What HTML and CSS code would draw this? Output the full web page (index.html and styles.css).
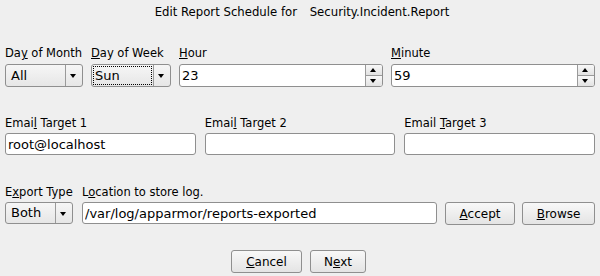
FILE: index.html
```html
<!DOCTYPE html>
<html>
<head>
    <title>Edit Report Schedule</title>
    <link rel="stylesheet" href="styles.css">
</head>
<body>
    <div class="dialog">
        <div class="title">
            <span>Edit Report Schedule for</span>
            <span class="report-name">Security.Incident.Report</span>
        </div>

        <div class="row schedule-row">
            <div class="field month-field">
                <label>Da<u>y</u> of Month</label>
                <div class="combo">
                    <span class="combo-text">All</span>
                    <span class="combo-arrow"></span>
                </div>
            </div>
            <div class="field week-field">
                <label><u>D</u>ay of Week</label>
                <div class="combo">
                    <span class="combo-text focused">Sun</span>
                    <span class="combo-arrow"></span>
                </div>
            </div>
            <div class="field grow">
                <label><u>H</u>our</label>
                <div class="spin">
                    <input type="text" value="23">
                    <div class="spin-buttons">
                        <span class="spin-up"></span>
                        <span class="spin-down"></span>
                    </div>
                </div>
            </div>
            <div class="field grow">
                <label><u>M</u>inute</label>
                <div class="spin">
                    <input type="text" value="59">
                    <div class="spin-buttons">
                        <span class="spin-up"></span>
                        <span class="spin-down"></span>
                    </div>
                </div>
            </div>
        </div>

        <div class="row email-row">
            <div class="field grow">
                <label>Emai<u>l</u> Target 1</label>
                <input class="text-input" type="text" value="root@localhost">
            </div>
            <div class="field grow">
                <label>Emai<u>l</u> Target 2</label>
                <input class="text-input" type="text" value="">
            </div>
            <div class="field grow">
                <label>Email <u>T</u>arget 3</label>
                <input class="text-input" type="text" value="">
            </div>
        </div>

        <div class="row export-row">
            <div class="field export-field">
                <label>E<u>x</u>port Type</label>
                <div class="combo">
                    <span class="combo-text">Both</span>
                    <span class="combo-arrow"></span>
                </div>
            </div>
            <div class="field grow">
                <label>L<u>o</u>cation to store log.</label>
                <input class="text-input" type="text" value="/var/log/apparmor/reports-exported">
            </div>
            <button class="btn accept-btn"><u>A</u>ccept</button>
            <button class="btn browse-btn"><u>B</u>rowse</button>
        </div>

        <div class="footer">
            <button class="btn cancel-btn"><u>C</u>ancel</button>
            <button class="btn next-btn">N<u>e</u>xt</button>
        </div>
    </div>
</body>
</html>
```

FILE: styles.css
```css
html, body {
    margin: 0;
    padding: 0;
}

body {
    background-color: #efefef;
    color: #000;
    font-family: "DejaVu Sans", sans-serif;
    font-size: 12px;
    line-height: 14px;
}

.dialog {
    width: 600px;
    height: 276px;
    padding: 5px 5px 0 5px;
    box-sizing: border-box;
}

.title {
    text-align: center;
    height: 14px;
    font-size: 11.7px;
    padding-left: 4px;
}

.report-name {
    margin-left: 9px;
}

.row {
    display: flex;
    align-items: flex-end;
}

.schedule-row {
    margin-top: 27px;
    gap: 8px;
}

.email-row {
    margin-top: 29px;
    gap: 9px;
}

.export-row {
    margin-top: 30px;
    gap: 8px;
}

.field {
    display: flex;
    flex-direction: column;
}

.field label {
    display: block;
    height: 14px;
    white-space: nowrap;
    font-size: 11.5px;
}

.schedule-row .field label {
    margin-bottom: 4px;
}

.email-row .field label,
.export-row .field label {
    margin-bottom: 3px;
}

.grow {
    flex: 1;
    min-width: 0;
}

.month-field {
    width: 78px;
}

.week-field {
    width: 80px;
}

.export-field {
    width: 68px;
    margin-right: 1px;
}

/* combo boxes */
.combo {
    height: 23px;
    box-sizing: border-box;
    border: 1px solid #8f8f8f;
    border-radius: 3px;
    background: linear-gradient(#f6f6f6, #e6e6e6);
    display: flex;
    align-items: center;
}

.export-row .combo {
    height: 22px;
}

.combo-text {
    flex: 1;
    padding-left: 5px;
    font-size: 13px;
}

.combo-text.focused {
    margin: 2px 1px 2px 2px;
    padding: 1px 0 1px 1px;
    outline: 1px dotted #000;
    line-height: 15px;
}

.combo-arrow {
    width: 17px;
    height: 100%;
    border-left: 1px solid #9a9a9a;
    box-sizing: border-box;
    position: relative;
    margin-left: 1px;
}

.combo-arrow::after {
    content: "";
    position: absolute;
    left: 4px;
    top: 9px;
    border-left: 3.5px solid transparent;
    border-right: 3.5px solid transparent;
    border-top: 4px solid #000;
}

/* text inputs */
input {
    font-family: "DejaVu Sans", sans-serif;
    font-size: 13px;
    color: #000;
}

.text-input {
    height: 22px;
    box-sizing: border-box;
    border: 1px solid #8f8f8f;
    border-radius: 3px;
    background: #fff;
    padding: 0 2px;
    margin: 0;
    outline: none;
    width: 100%;
}

/* spin boxes */
.spin {
    display: flex;
    height: 23px;
    box-sizing: border-box;
    border: 1px solid #8f8f8f;
    border-radius: 3px;
    background: #fff;
    overflow: hidden;
}

.spin input {
    flex: 1;
    min-width: 0;
    border: none;
    outline: none;
    padding: 0 2px;
    margin: 0;
    background: transparent;
}

.spin-buttons {
    width: 16px;
    display: flex;
    flex-direction: column;
    border-left: 1px solid #9a9a9a;
}

.spin-up,
.spin-down {
    flex: 1;
    position: relative;
    background: linear-gradient(#f8f8f8, #e2e2e2);
}

.spin-up {
    border-bottom: 1px solid #9a9a9a;
}

.spin-up::after,
.spin-down::after {
    content: "";
    position: absolute;
    left: 4px;
    top: 3px;
    border-left: 3.5px solid transparent;
    border-right: 3.5px solid transparent;
}

.spin-up::after {
    border-bottom: 4px solid #000;
}

.spin-down::after {
    border-top: 4px solid #000;
}

/* buttons */
.btn {
    height: 23px;
    box-sizing: border-box;
    border: 1px solid #8f8f8f;
    border-radius: 3px;
    background: linear-gradient(#f8f8f8, #e4e4e4);
    font-family: "DejaVu Sans", sans-serif;
    font-size: 12px;
    color: #000;
    padding: 0;
    margin-bottom: -1px;
}

.accept-btn {
    width: 70px;
}

.browse-btn {
    width: 73px;
    margin-left: -1px;
}

.footer {
    display: flex;
    justify-content: center;
    gap: 8px;
    margin-top: 26px;
    padding-right: 3px;
}

.cancel-btn {
    width: 71px;
}

.next-btn {
    width: 56px;
}
```
